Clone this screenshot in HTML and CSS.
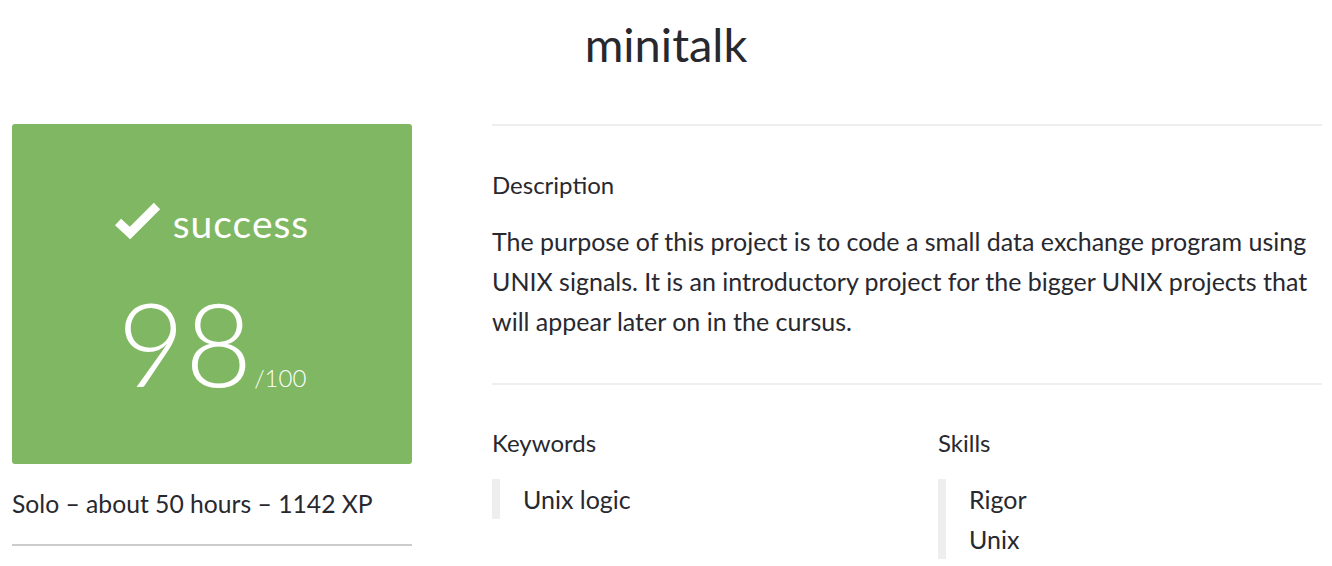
FILE: index.html
```html
<!DOCTYPE html>
<html>
<head>
<meta charset="utf-8">
<link rel="stylesheet" href="styles.css">
</head>
<body>
<h1 class="title">minitalk</h1>
<div class="main">
  <div class="left">
    <div class="mark">
      <div class="status">
        <svg class="check" viewBox="0 0 46 40" width="46" height="40"><path d="M3 22 L15 33 L42 6" fill="none" stroke="#fff" stroke-width="9" stroke-linejoin="miter" stroke-linecap="butt"/></svg>
        <span class="status-text">success</span>
      </div>
      <div class="score"><span class="num">98</span><span class="den">/100</span></div>
    </div>
    <div class="meta">Solo – about 50 hours – 1142 XP</div>
  </div>
  <div class="right">
    <section class="desc">
      <h2 class="label">Description</h2>
      <p class="text">The purpose of this project is to code a small data exchange program using UNIX signals. It is an introductory project for the bigger UNIX projects that will appear later on in the cursus.</p>
    </section>
    <section class="tags">
      <div class="col">
        <h2 class="label">Keywords</h2>
        <ul class="list"><li>Unix logic</li></ul>
      </div>
      <div class="col">
        <h2 class="label">Skills</h2>
        <ul class="list"><li>Rigor</li><li>Unix</li></ul>
      </div>
    </section>
  </div>
</div>
</body>
</html>
```
FILE: styles.css
```css
* { box-sizing: border-box; }
body {
  margin: 0;
  font-family: "Lato", "Noto Sans", sans-serif;
  color: #28282f;
  background: #fff;
}
.title {
  margin: 0;
  height: 124px;
  padding-top: 16px;
  text-align: center;
  font-weight: 400;
  font-size: 47px;
  line-height: 56px;
}
.main {
  display: flex;
  gap: 80px;
  padding: 0 10px 0 12px;
}
.left { width: 400px; flex: none; }
.mark {
  height: 340px;
  background: #80b763;
  border-radius: 3px;
  color: #fff;
  display: flex;
  flex-direction: column;
  align-items: center;
  padding-top: 76px;
}
.status { display: flex; align-items: flex-end; gap: 12px; }
.check { margin-bottom: 6px; }
.status-text { font-size: 39px; line-height: 46px; letter-spacing: 1px; }
.score { display: flex; align-items: baseline; margin-top: 42px; }
.num { font-size: 116px; line-height: 110px; font-weight: 300; }
.den { font-size: 24px; margin-left: 2px; font-weight: 300; }
.meta {
  font-size: 24.7px;
  line-height: 40px;
  padding: 20px 0 20px;
  border-bottom: 2px solid #ccc;
  margin: 0;
}
.right { flex: 1; min-width: 0; }
.desc {
  border-top: 2px solid #eee;
  border-bottom: 2px solid #eee;
  padding: 43px 0 42px;
}
.label { margin: 0 0 20px; font-size: 24px; font-weight: 400; line-height: 32px; }
.text { margin: 0; font-size: 25px; line-height: 40px; }
.tags { display: flex; padding-top: 42px; }
.col { flex: 0 0 446px; }
.list {
  list-style: none;
  margin: 0;
  padding: 0 0 0 23px;
  border-left: 8px solid #eee;
  font-size: 25px;
  line-height: 40px;
}
```
